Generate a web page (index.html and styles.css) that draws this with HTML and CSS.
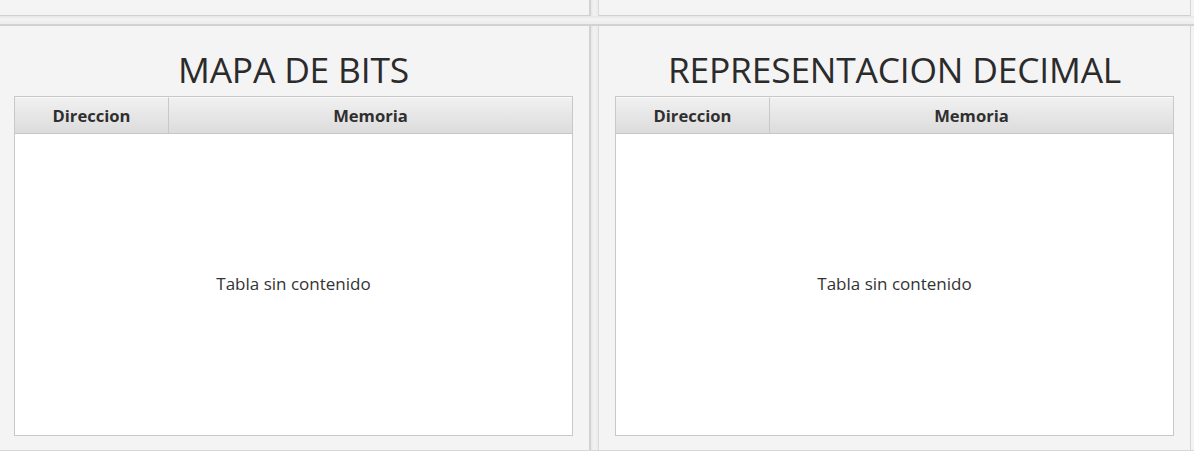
FILE: index.html
```html
<!DOCTYPE html>
<html lang="es">
<head>
<meta charset="utf-8">
<title>Memoria</title>
<link rel="stylesheet" href="styles.css">
</head>
<body>
<div class="app">
  <div class="row top">
    <div class="pane pane-left top-pane"></div>
    <div class="vdiv"></div>
    <div class="pane pane-right top-pane"></div>
  </div>
  <div class="hdiv"></div>
  <div class="row bottom">
    <div class="pane pane-left bottom-pane">
      <h1 class="title">MAPA DE BITS</h1>
      <div class="table">
        <div class="thead">
          <div class="th th-dir">Direccion</div>
          <div class="th th-mem">Memoria</div>
        </div>
        <div class="tbody">Tabla sin contenido</div>
      </div>
    </div>
    <div class="vdiv"></div>
    <div class="pane pane-right bottom-pane">
      <h1 class="title">REPRESENTACION DECIMAL</h1>
      <div class="table">
        <div class="thead">
          <div class="th th-dir">Direccion</div>
          <div class="th th-mem">Memoria</div>
        </div>
        <div class="tbody">Tabla sin contenido</div>
      </div>
    </div>
  </div>
</div>
</body>
</html>
```
FILE: styles.css
```css
html, body {
  margin: 0;
  padding: 0;
  background: #f4f4f4;
  font-family: "Open Sans", "Noto Sans", sans-serif;
  color: #333;
}
.app {
  width: 1194px;
  height: 451px;
  display: flex;
  flex-direction: column;
  overflow: hidden;
}
.row {
  display: flex;
}
.top {
  height: 16px;
}
.pane-left {
  width: 589px;
  box-sizing: border-box;
}
.pane-right {
  width: 592px;
  box-sizing: border-box;
  border-right: 1px solid #d6d6d6;
}
.top-pane {
  border-bottom: 1px solid #d0d0d0;
}
.vdiv {
  width: 10px;
  box-sizing: border-box;
  border-left: 2px solid #d2d2d2;
  border-right: 1px solid #dadada;
  background: linear-gradient(to right, #e6e6e6, #f2f2f2 40%, #ececec);
}
.hdiv {
  height: 10px;
  box-sizing: border-box;
  border-bottom: 2px solid #d2d2d2;
  background: linear-gradient(to bottom, #e6e6e6, #f4f4f4 40%, #ececec);
}
.bottom {
  height: 424px;
  border-bottom: 1px solid #d8d8d8;
}
.bottom-pane {
  display: flex;
  flex-direction: column;
  padding: 0 16px 14px 14px;
}
.pane-right.bottom-pane {
  padding: 0 16px 14px 16px;
}
.title {
  margin: 0;
  height: 70px;
  line-height: 86px;
  text-align: center;
  font-size: 35.4px;
  font-weight: 400;
  color: #2b2b2b;
  letter-spacing: -0.2px;
}
.table {
  flex: 1;
  display: flex;
  flex-direction: column;
  border: 1px solid #c8c8c8;
  background: #fff;
}
.thead {
  display: flex;
  height: 37px;
  box-sizing: border-box;
  border-bottom: 1px solid #c6c6c6;
  background: linear-gradient(to bottom, #f1f1f1, #dcdcdc);
}
.th {
  display: flex;
  align-items: center;
  justify-content: center;
  font-size: 16.6px;
  font-weight: 700;
  color: #2f2f2f;
  box-sizing: border-box;
  border-top: 1px solid #fafafa;
}
.th-dir {
  width: 154px;
  border-right: 1px solid #c8c8c8;
}
.th-mem {
  flex: 1;
}
.tbody {
  flex: 1;
  display: flex;
  align-items: center;
  justify-content: center;
  font-size: 17px;
  color: #333;
  padding-bottom: 2px;
}
```
